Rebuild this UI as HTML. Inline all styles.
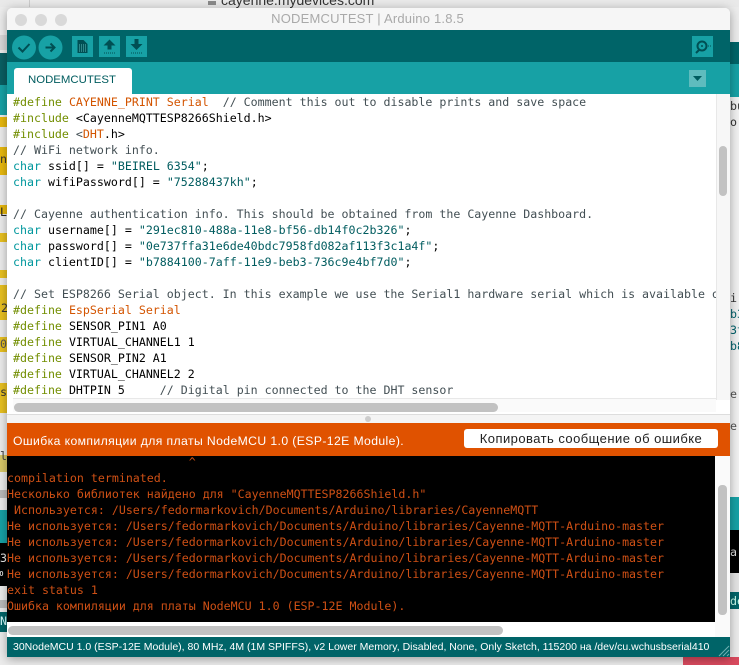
<!DOCTYPE html>
<html><head><meta charset="utf-8"><style>
html,body{margin:0;padding:0}
body{width:739px;height:665px;overflow:hidden;background:#ececec;position:relative;font-family:"Liberation Sans",sans-serif}
.a{position:absolute}
.m{font-family:"DejaVu Sans Mono","Liberation Mono",monospace;font-size:11.62px;line-height:16px;white-space:pre}
#code{left:13px;top:94px;width:703px;height:306px;overflow:hidden;color:#434f54}
#con{left:7px;top:454px;width:708px;height:168px;overflow:hidden;color:#cf5015}
.k{color:#728e00}.o{color:#d35400}.t{color:#00979d}.s{color:#005c5f}.b{color:#000}.c{color:#434f54}
</style></head><body>
<!-- background -->
<div class="a" style="left:0;top:0;width:739px;height:7px;background:#e9e9e9"></div>
<div class="a" style="left:29px;top:0;width:1px;height:7px;background:#ccc"></div>
<div class="a" style="left:208px;top:1px;width:8px;height:4px;background:#8a8a8a"></div>
<div class="a" style="left:221px;top:-8px;font-size:14px;line-height:16px;color:#333">cayenne.mydevices.com</div>
<div class="a" style="left:0;top:35px;width:7px;height:15px;background:#d8d8d8"></div>
<div class="a" style="left:0;top:53px;width:7px;height:32px;background:#0a5f63"></div>
<div class="a" style="left:0;top:85px;width:7px;height:30px;background:#17a1a5"></div>
<div class="a" style="left:0;top:117px;width:7px;height:10px;background:#e8b90e"></div>
<div class="a" style="left:0;top:147px;width:7px;height:28px;background:#e8b90e"></div>
<div class="a" style="left:0;top:205px;width:7px;height:9px;background:#e8b90e"></div>
<div class="a" style="left:0;top:233px;width:7px;height:9px;background:#e8c020"></div>
<div class="a" style="left:0;top:270px;width:7px;height:8px;background:#e8c020"></div>
<div class="a" style="left:0;top:285px;width:7px;height:35px;background:#e8c020"></div>
<div class="a" style="left:0;top:337px;width:7px;height:15px;background:#e8c020"></div>
<div class="a" style="left:0;top:383px;width:7px;height:30px;background:#e8c020"></div>
<div class="a" style="left:0;top:455px;width:7px;height:17px;background:#d8c868"></div>
<div class="a" style="left:0;top:490px;width:7px;height:8px;background:#bbb"></div>
<div class="a" style="left:0;top:510px;width:7px;height:33px;background:#17a1a5"></div>
<div class="a" style="left:0;top:543px;width:7px;height:43px;background:#000"></div>
<div class="a" style="left:0;top:600px;width:7px;height:8px;background:#bbb"></div>
<div class="a" style="left:0;top:612px;width:7px;height:20px;background:#006468"></div>
<div class="a" style="left:730px;top:10px;width:9px;height:32px;background:#ececec"></div>
<div class="a" style="left:730px;top:42px;width:9px;height:22px;background:#006468"></div>
<div class="a" style="left:730px;top:64px;width:9px;height:33px;background:#17a1a5"></div>
<div class="a" style="left:730px;top:97px;width:9px;height:400px;background:#f1f1f1"></div>
<div class="a" style="left:730px;top:497px;width:9px;height:33px;background:#17a1a5"></div>
<div class="a" style="left:730px;top:530px;width:9px;height:43px;background:#000"></div>
<div class="a" style="left:730px;top:573px;width:9px;height:19px;background:#e4e4e4"></div>
<div class="a" style="left:730px;top:592px;width:9px;height:17px;background:#006468"></div>
<div class="a" style="left:683px;top:657px;width:56px;height:8px;background:#d94a5e"></div>
<div class="a m" style="left:730px;top:98px;color:#333">bu
o</div>
<div class="a m" style="left:730px;top:290px;color:#333">ir</div>
<div class="a m" style="left:730px;top:306px;color:#00606a">b3
3t
b8</div>
<div class="a m" style="left:730px;top:386px;color:#555">e</div>
<div class="a m" style="left:730px;top:418px;color:#555">e</div>
<div class="a m" style="left:730px;top:544px;color:#ddd">ar</div>
<div class="a m" style="left:730px;top:593px;color:#cfe">de</div>
<div class="a m" style="left:0;top:151px;color:#333">n</div>
<div class="a m" style="left:0;top:204px;color:#222">L</div>
<div class="a m" style="left:1px;top:300px;color:#333">2</div>
<div class="a m" style="left:0;top:336px;color:#555">0</div>
<div class="a m" style="left:0;top:384px;color:#333">s</div>
<div class="a m" style="left:0;top:448px;color:#444">l</div>
<div class="a m" style="left:0;top:550px;color:#eee">3</div>
<div class="a m" style="left:-2px;top:566px;color:#eee;font-size:9px">ю</div>
<div class="a m" style="left:0;top:613px;color:#dff">N</div>
<!-- window -->
<div class="a" style="left:7px;top:8px;width:723px;height:649px;border-radius:5px 5px 0 0;background:#fff;box-shadow:0 2px 10px rgba(0,0,0,.35);overflow:hidden">
<div class="a" style="left:0;top:0;width:723px;height:22px;background:#f6f6f6"></div>
<div class="a" style="left:8px;top:6px;width:12px;height:12px;border-radius:50%;background:#d9d9d9"></div>
<div class="a" style="left:28px;top:6px;width:12px;height:12px;border-radius:50%;background:#d9d9d9"></div>
<div class="a" style="left:48px;top:6px;width:12px;height:12px;border-radius:50%;background:#d9d9d9"></div>
<div class="a" style="left:0;top:2px;width:723px;text-align:center;font-size:13px;line-height:18px;color:#a9a9a9;margin-left:-1px;letter-spacing:.2px">NODEMCUTEST | Arduino 1.8.5</div>
<div class="a" style="left:0;top:22px;width:723px;height:32px;background:#006468"></div>
<div class="a" style="left:0;top:54px;width:723px;height:32px;background:#17a1a5"></div>
<div class="a" style="left:7px;top:60px;width:118px;height:26px;background:#fff;border-radius:3px 3px 0 0"></div>
<div class="a" style="left:21px;top:63px;font-size:11.4px;line-height:18px;color:#005c5f">NODEMCUTEST</div>
<div class="a" style="left:682px;top:62px;width:17px;height:17px;background:#5fbcbe"></div>
<svg class="a" style="left:682px;top:62px" width="17" height="17"><path d="M4 6h9l-4.500 5z" fill="#005c5f"/></svg>
<!-- editor gutters -->
<div class="a" style="left:709px;top:86px;width:14px;height:306px;background:#f7f7f7;border-left:1px solid #e8e8e8;box-sizing:border-box"></div>
<div class="a" style="left:712px;top:138px;width:8px;height:50px;border-radius:4px;background:#c2c2c2"></div>
<div class="a" style="left:6px;top:390px;width:703px;height:14px;background:#fafafa;border-top:1px solid #e8e8e8;box-sizing:border-box"></div>
<div class="a" style="left:7px;top:395px;width:484px;height:9px;border-radius:5px;background:#c2c2c2"></div>
<div class="a" style="left:0;top:406px;width:723px;height:9px;background:#f4f4f4;border-top:1px solid #ddd;box-sizing:border-box"></div>
<div class="a" style="left:358px;top:408px;width:6px;height:6px;border-radius:50%;background:#ccc"></div>
<div class="a" style="left:0;top:415px;width:723px;height:33px;background:#e05200"></div>
<div class="a" style="left:6px;top:425px;font-size:12.2px;line-height:16px;color:#fff;letter-spacing:.4px">Ошибка компиляции для платы NodeMCU 1.0 (ESP-12E Module).</div>
<div class="a" style="left:457px;top:421px;width:254px;height:19px;background:#fff;border-radius:3px;text-align:center;font-size:13px;line-height:19px;color:#222;letter-spacing:.45px">Копировать сообщение об ошибке</div>
<div class="a" style="left:0;top:448px;width:708px;height:166px;background:#000"></div>
<div class="a" style="left:708px;top:448px;width:15px;height:181px;background:#fafafa"></div>
<div class="a" style="left:0;top:614px;width:708px;height:15px;background:#fff"></div>
<div class="a" style="left:711px;top:477px;width:9px;height:130px;border-radius:4px;background:#c2c2c2"></div>
<div class="a" style="left:1px;top:618px;width:495px;height:9px;border-radius:5px;background:#c2c2c2"></div>
<div class="a" style="left:0;top:629px;width:723px;height:20px;background:#006468"></div>
<div class="a" style="left:6px;top:632px;font-size:10.5px;line-height:15px;color:#fff;white-space:nowrap">30NodeMCU 1.0 (ESP-12E Module), 80 MHz, 4M (1M SPIFFS), v2 Lower Memory, Disabled, None, Only Sketch, 115200 на /dev/cu.wchusbserial410</div>
<svg class="a" style="left:710px;top:636px" width="13" height="13"><path d="M2 12L12 2M6 12l6-6M10 12l2-2" stroke="#6fb0b2" stroke-width="1"/></svg>
<!-- toolbar -->
<svg class="a" style="left:0;top:22px" width="723" height="32">
<circle cx="17" cy="17.500" r="12" fill="#17a1a5"/><path d="M11.500 17.500l4 4 7-7.500" fill="none" stroke="#004f53" stroke-width="2"/>
<circle cx="43.500" cy="17.500" r="12" fill="#17a1a5"/><path d="M38.500 17.500h9M43.500 13.500l4 4-4 4" fill="none" stroke="#004f53" stroke-width="2"/>
<rect x="65" y="6" width="21" height="21" fill="#17a1a5"/><path d="M70.500 10h6l4 4v9h-10z" fill="#004f53"/><path d="M72 15h7M72 17h7M72 19h7M72 21h7" stroke="#5fbcbe" stroke-dasharray="1 1"/>
<rect x="92" y="6" width="21" height="21" fill="#17a1a5"/><path d="M102.500 9.500l6 6h-4v4h-4v-4h-4z" fill="#004f53"/><path d="M97 23h11" stroke="#004f53" stroke-dasharray="1 1"/>
<rect x="119" y="6" width="21" height="21" fill="#17a1a5"/><path d="M127.500 9h4v5h4l-6 6-6-6h4z" fill="#004f53"/><path d="M124 23h11" stroke="#004f53" stroke-dasharray="1 1"/>
<rect x="685" y="6" width="21" height="21" fill="#17a1a5"/><circle cx="695" cy="16" r="4.500" fill="none" stroke="#004f53" stroke-width="2"/><circle cx="695" cy="16" r="1" fill="#004f53"/><path d="M692 20l-3 3" stroke="#004f53" stroke-width="2"/><path d="M701 16h3" stroke="#004f53" stroke-dasharray="1 1"/>
</svg>
</div>
<div id="code" class="a m"><span class="k">#define</span> <span class="o">CAYENNE_PRINT Serial</span>  // Comment this out to disable prints and save space
<span class="k">#include</span> <span class="b">&lt;CayenneMQTTESP8266Shield.h&gt;</span>
<span class="k">#include</span> &lt;<span class="o">DHT</span><span class="b">.h&gt;</span>
// WiFi network info.
<span class="t">char</span> <span class="b">ssid[] =</span> <span class="s">"BEIREL 6354"</span><span class="b">;</span>
<span class="t">char</span> <span class="b">wifiPassword[] =</span> <span class="s">"75288437kh"</span><span class="b">;</span>

// Cayenne authentication info. This should be obtained from the Cayenne Dashboard.
<span class="t">char</span> <span class="b">username[] =</span> <span class="s">"291ec810-488a-11e8-bf56-db14f0c2b326"</span><span class="b">;</span>
<span class="t">char</span> <span class="b">password[] =</span> <span class="s">"0e737ffa31e6de40bdc7958fd082af113f3c1a4f"</span><span class="b">;</span>
<span class="t">char</span> <span class="b">clientID[] =</span> <span class="s">"b7884100-7aff-11e9-beb3-736c9e4bf7d0"</span><span class="b">;</span>

// Set ESP8266 Serial object. In this example we use the Serial1 hardware serial which is available o
<span class="k">#define</span> <span class="o">EspSerial Serial</span>
<span class="k">#define</span> <span class="b">SENSOR_PIN1 A0</span>
<span class="k">#define</span> <span class="b">VIRTUAL_CHANNEL1 1</span>
<span class="k">#define</span> <span class="b">SENSOR_PIN2 A1</span>
<span class="k">#define</span> <span class="b">VIRTUAL_CHANNEL2 2</span>
<span class="k">#define</span> <span class="b">DHTPIN 5</span>     // Digital pin connected to the DHT sensor</div>
<div id="con" class="a m">                          ^
compilation terminated.
Несколько библиотек найдено для "CayenneMQTTESP8266Shield.h"
 Используется: /Users/fedormarkovich/Documents/Arduino/libraries/CayenneMQTT
Не используется: /Users/fedormarkovich/Documents/Arduino/libraries/Cayenne-MQTT-Arduino-master
Не используется: /Users/fedormarkovich/Documents/Arduino/libraries/Cayenne-MQTT-Arduino-master
Не используется: /Users/fedormarkovich/Documents/Arduino/libraries/Cayenne-MQTT-Arduino-master
Не используется: /Users/fedormarkovich/Documents/Arduino/libraries/Cayenne-MQTT-Arduino-master
exit status 1
Ошибка компиляции для платы NodeMCU 1.0 (ESP-12E Module).</div>
</body></html>
